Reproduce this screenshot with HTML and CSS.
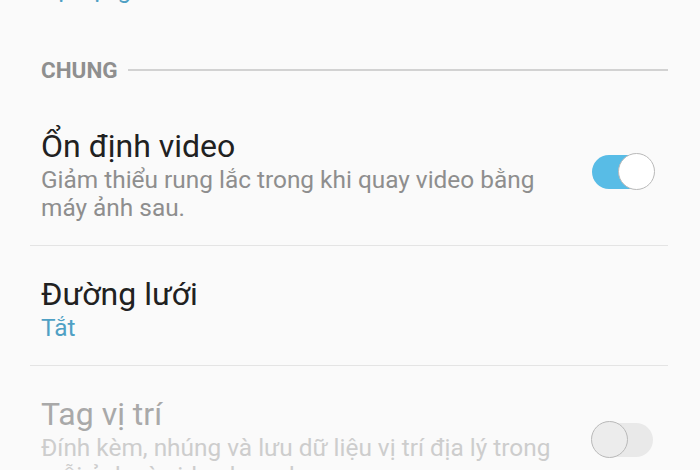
FILE: index.html
```html
<!DOCTYPE html>
<html lang="vi">
<head>
<meta charset="utf-8">
<link rel="stylesheet" href="styles.css">
</head>
<body>
<div class="screen">
  <div class="prev">
    <div class="sub link">Tự động</div>
  </div>

  <div class="section-head">
    <span class="section-title">CHUNG</span>
    <span class="section-line"></span>
  </div>

  <div class="item">
    <div class="text">
      <div class="title">Ổn định video</div>
      <div class="sub">Giảm thiểu rung lắc trong khi quay video bằng máy ảnh sau.</div>
    </div>
    <div class="switch on"><span class="track"></span><span class="thumb"></span></div>
  </div>

  <div class="item">
    <div class="text">
      <div class="title">Đường lưới</div>
      <div class="sub link">Tắt</div>
    </div>
  </div>

  <div class="item disabled">
    <div class="text">
      <div class="title">Tag vị trí</div>
      <div class="sub">Đính kèm, nhúng và lưu dữ liệu vị trí địa lý trong mỗi ảnh và video bạn chụp.</div>
    </div>
    <div class="switch off"><span class="track"></span><span class="thumb"></span></div>
  </div>
</div>
</body>
</html>
```

FILE: styles.css
```css
html, body {
  margin: 0;
  padding: 0;
  background: #fafafa;
  height: 100%;
  overflow: hidden;
}
body {
  font-family: Roboto, "Noto Sans", "Liberation Sans", sans-serif;
}
.screen {
  padding: 0 32px 0 30px;
}
.prev {
  margin-top: -24px;
  padding-left: 11px;
}
.sub {
  font-size: 24.4px;
  line-height: 28px;
  color: #8e8e8e;
}
.link {
  color: #4fa0c4;
}
.section-head {
  display: flex;
  align-items: center;
  gap: 10px;
  padding-left: 11px;
  margin-top: 54.5px;
  margin-bottom: 17px;
}
.section-title {
  font-size: 22.5px;
  line-height: 22px;
  font-weight: 700;
  color: #8f8f8f;
}
.section-line {
  flex: 1;
  height: 2px;
  background: #d2d2d2;
}
.item {
  display: flex;
  align-items: center;
  padding: 30px 13px 23px 11px;
  border-bottom: 1px solid #e4e4e4;
}
.text {
  flex: 1;
  max-width: 520px;
}
.title {
  font-size: 32px;
  line-height: 36px;
  color: #212121;
  margin-bottom: 2px;
}
.disabled .title { color: #a9a9a9; }
.disabled .sub { color: #cdcdcd; }
.switch {
  margin-left: auto;
  margin-bottom: 6px;
  position: relative;
  width: 65px;
  height: 38px;
  flex: none;
}
.track {
  position: absolute;
  left: 2px;
  right: 3px;
  top: 2px;
  height: 34px;
  border-radius: 17px;
}
.thumb {
  position: absolute;
  top: 0;
  width: 35px;
  height: 35px;
  border-radius: 50%;
  border: 1.5px solid #b9b9b9;
}
.on .track { background: #58bce6; }
.on .thumb { right: 0; background: #ffffff; }
.off .track { background: #e9e9e9; left: 4px; right: 2px; }
.off .thumb { left: 1px; background: #ececec; }
```
